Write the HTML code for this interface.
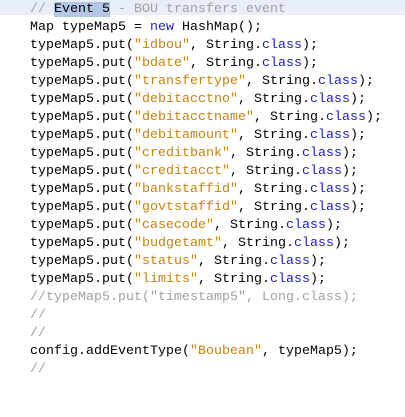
<!DOCTYPE html>
<html><head><style>
html,body{margin:0;padding:0;background:#fff;width:405px;height:417px;overflow:hidden}
.band{position:absolute;left:0;top:0;width:405px;height:15px;background:#e8eef9}
pre{position:absolute;left:30px;top:1px;margin:0;font-family:"Liberation Mono",monospace;font-size:13.33px;line-height:18px;color:#000}
.c{color:#a0a0a0}.s{color:#c8820a}.k{color:#1c1cc8}.sel{background:#b4c6e6;color:#000}
</style></head><body>
<div class="band"></div>
<pre><span class="c">// <span class="sel">Event 5</span> - BOU transfers event</span>
Map typeMap5 = <span class="k">new</span> HashMap();
typeMap5.put(<span class="s">"idbou"</span>, String.<span class="k">class</span>);
typeMap5.put(<span class="s">"bdate"</span>, String.<span class="k">class</span>);
typeMap5.put(<span class="s">"transfertype"</span>, String.<span class="k">class</span>);
typeMap5.put(<span class="s">"debitacctno"</span>, String.<span class="k">class</span>);
typeMap5.put(<span class="s">"debitacctname"</span>, String.<span class="k">class</span>);
typeMap5.put(<span class="s">"debitamount"</span>, String.<span class="k">class</span>);
typeMap5.put(<span class="s">"creditbank"</span>, String.<span class="k">class</span>);
typeMap5.put(<span class="s">"creditacct"</span>, String.<span class="k">class</span>);
typeMap5.put(<span class="s">"bankstaffid"</span>, String.<span class="k">class</span>);
typeMap5.put(<span class="s">"govtstaffid"</span>, String.<span class="k">class</span>);
typeMap5.put(<span class="s">"casecode"</span>, String.<span class="k">class</span>);
typeMap5.put(<span class="s">"budgetamt"</span>, String.<span class="k">class</span>);
typeMap5.put(<span class="s">"status"</span>, String.<span class="k">class</span>);
typeMap5.put(<span class="s">"limits"</span>, String.<span class="k">class</span>);
<span class="c">//typeMap5.put("timestamp5", Long.class);</span>
<span class="c">//</span>
<span class="c">//</span>
config.addEventType(<span class="s">"Boubean"</span>, typeMap5);
<span class="c">//</span></pre>
</body></html>
